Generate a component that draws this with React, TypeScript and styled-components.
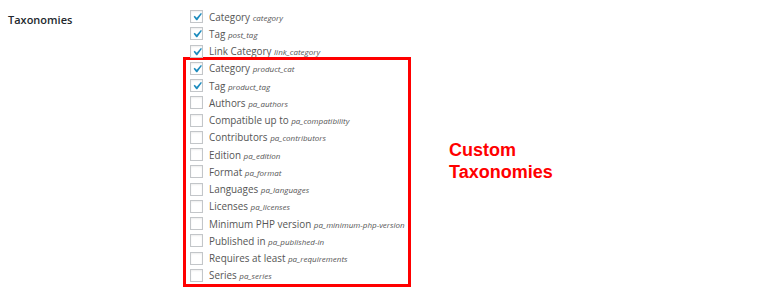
import styled, { createGlobalStyle } from "styled-components";

const GlobalStyle = createGlobalStyle`
  body {
    margin: 0;
    background: #fff;
    font-family: "Open Sans", "Noto Sans", sans-serif;
  }
`;

type Tax = { label: string; slug: string; checked?: boolean };

const builtIn: Tax[] = [
  { label: "Category", slug: "category", checked: true },
  { label: "Tag", slug: "post_tag", checked: true },
  { label: "Link Category", slug: "link_category", checked: true },
];

const custom: Tax[] = [
  { label: "Category", slug: "product_cat", checked: true },
  { label: "Tag", slug: "product_tag", checked: true },
  { label: "Authors", slug: "pa_authors" },
  { label: "Compatible up to", slug: "pa_compatibility" },
  { label: "Contributors", slug: "pa_contributors" },
  { label: "Edition", slug: "pa_edition" },
  { label: "Format", slug: "pa_format" },
  { label: "Languages", slug: "pa_languages" },
  { label: "Licenses", slug: "pa_licenses" },
  { label: "Minimum PHP version", slug: "pa_minimum-php-version" },
  { label: "Published in", slug: "pa_published-in" },
  { label: "Requires at least", slug: "pa_requirements" },
  { label: "Series", slug: "pa_series" },
];

const TaxRow = ({ label, slug, checked }: Tax) => (
  <Row>
    <Box>
      {checked && (
        <Tick viewBox="0 0 20 20">
          <path d="M14.83 4.89l1.34.94-5.81 8.38H9.02L5.78 9.67l1.34-1.25 2.57 2.4z" />
        </Tick>
      )}
    </Box>
    <Label>
      {label} <Slug>{slug}</Slug>
    </Label>
  </Row>
);

const App = () => {
  return (
    <>
      <GlobalStyle />
      <Page>
        <Heading>Taxonomies</Heading>
        <List>
          {builtIn.map((t) => (
            <TaxRow key={t.slug} {...t} />
          ))}
          <Highlight>
            <Group>
              {custom.map((t) => (
                <TaxRow key={t.slug} {...t} />
              ))}
            </Group>
            <Callout>
              Custom
              <br />
              Taxonomies
            </Callout>
          </Highlight>
        </List>
      </Page>
    </>
  );
};

export default App;

const Page = styled.div`
  display: flex;
  padding: 8px 0 0 8px;
`;

const Heading = styled.div`
  width: 182px;
  flex-shrink: 0;
  padding-top: 3px;
  font-size: 11px;
  font-weight: 600;
  color: #23282d;
  line-height: 17px;
`;

const List = styled.div`
  display: flex;
  flex-direction: column;
`;

const Row = styled.div`
  display: flex;
  align-items: center;
  height: 17.25px;
`;

const Box = styled.span`
  position: relative;
  width: 13px;
  height: 13px;
  flex-shrink: 0;
  border: 1px solid #c3c6c9;
  box-sizing: border-box;
  background: #fff;
  box-shadow: inset 0 1px 2px rgba(0, 0, 0, 0.07);
  margin-right: 6px;
`;

const Tick = styled.svg`
  position: absolute;
  left: -2px;
  top: -2px;
  width: 16px;
  height: 16px;
  fill: #1e8cbe;
`;

const Label = styled.span`
  font-size: 9.9px;
  color: #555;
  white-space: nowrap;
`;

const Slug = styled.em`
  font-size: 8px;
  color: #555;
`;

const Highlight = styled.div`
  display: flex;
  align-items: flex-start;
  margin-top: -3px;
`;

const Group = styled.div`
  width: 228px;
  box-sizing: border-box;
  margin-left: -7px;
  padding-left: 4px;
  border: 3px solid #f00;
`;

const Callout = styled.div`
  margin: 82px 0 0 38px;
  font-family: "Liberation Sans", Arial, sans-serif;
  font-weight: 700;
  font-size: 18px;
  line-height: 22px;
  color: #f00;
`;
